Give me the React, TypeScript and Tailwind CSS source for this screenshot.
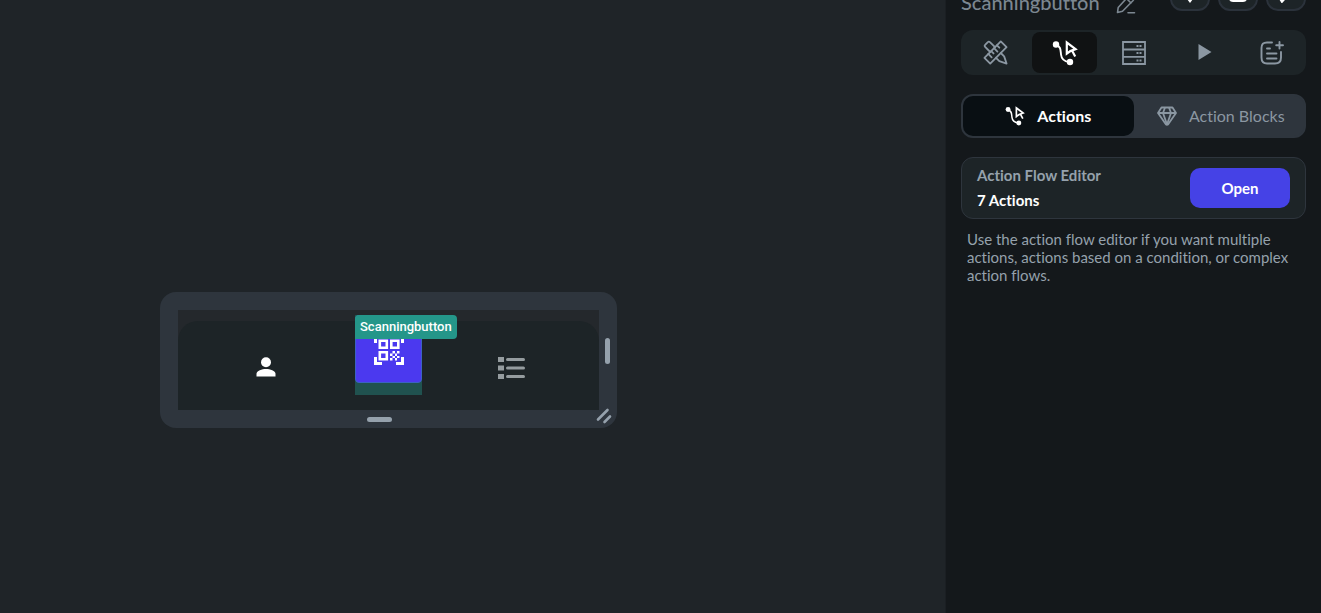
import React, { useState } from "react";

type IconProps = { className?: string };

const FlowIcon = ({ className }: IconProps) => (
	<svg className={className} viewBox="0 0 26 26" fill="none" stroke="currentColor" strokeLinecap="round">
		<circle cx="4" cy="4.500" r="3.200" fill="currentColor" stroke="none" />
		<circle cx="18" cy="22" r="3.200" fill="currentColor" stroke="none" />
		<path strokeWidth={1.9} d="M4 5c5 1.500 4.500 5 5 9.500C9.500 19 12 21.500 17 22" />
		<path strokeWidth={2.2} strokeLinejoin="miter" strokeLinecap="butt" d="M14.800 2.500v11.200l3.600-2.600 5.200-2zM20 10.500l3.200 6" />
	</svg>
);

const DesignIcon = ({ className }: IconProps) => (
	<svg
		className={className}
		viewBox="0 0 26 26"
		fill="none"
		stroke="currentColor"
		strokeWidth={1.9}
		strokeLinecap="round"
		strokeLinejoin="round"
	>
		<path d="M18.500 1.500 24.500 7.500 7.500 24.500 1.500 18.500z" />
		<path d="M14.500 5.500l2.500 2.500M11.500 8.500l3.500 3.500M8.500 11.500l2.500 2.500M5.500 14.500l3.500 3.500" />
		<path d="M7.500 12.500 2.200 7.200a1.500 1.500 0 0 1 0-2.200L5 2.200a1.500 1.500 0 0 1 2.200 0l5.300 5.300" />
		<path d="M18.500 13.500l3.500 3.500 2.500 7.500-7.500-2.500-3.500-3.500" />
	</svg>
);

const StorageIcon = ({ className }: IconProps) => (
	<svg className={className} viewBox="0 0 24 24" fill="none" stroke="currentColor" strokeWidth={1.8}>
		<path d="M1 1h22v22H1zM1 8.500h22M1 15.800h22" />
		<path strokeWidth={2} strokeDasharray="2 1" d="M14.500 4.900h5M14.500 12.100h5M14.500 19.500h5" />
	</svg>
);

const PlayIcon = ({ className }: IconProps) => (
	<svg className={className} viewBox="0 0 14 18" fill="currentColor">
		<path d="M.500 1v16L13.500 9z" />
	</svg>
);

const DocsIcon = ({ className }: IconProps) => (
	<svg
		className={className}
		viewBox="0 0 24 24"
		fill="none"
		stroke="currentColor"
		strokeWidth={1.9}
		strokeLinecap="round"
		strokeLinejoin="round"
	>
		<path d="M12 1.500H7C3 1.500 1.500 3.500 1.500 7v9.500c0 4 1.500 6 5.500 6h8c4 0 6-2 6-6V11" />
		<path d="M19.500 1v6.500M16.200 4.200H23M7 7.500h3M7 12.500h9.500M7 17.500h9.500" />
	</svg>
);

const DiamondIcon = ({ className }: IconProps) => (
	<svg className={className} viewBox="0 0 20 20" fill="none" stroke="currentColor" strokeWidth={1.8} strokeLinejoin="round">
		<path d="M4.500 1.500h11l3.500 5.500-8 11.500H9L1 7z" />
		<path d="M1 7h18M8 1.500 6 7l4 11.500L14 7l-2-5.500" />
	</svg>
);

const PencilIcon = ({ className }: IconProps) => (
	<svg
		className={className}
		viewBox="0 0 20 20"
		fill="none"
		stroke="currentColor"
		strokeWidth={1.6}
		strokeLinecap="round"
		strokeLinejoin="round"
	>
		<path d="M1.500 18.500l.700-5L12.500 2.200c1.500-1.600 3-1.400 4.400 0 1.500 1.500 1.400 3 0 4.500L6.500 17.200zM10.500 4.500l4.500 4.500M12 18.800h6.500" />
	</svg>
);

const PersonIcon = ({ className }: IconProps) => (
	<svg className={className} viewBox="0 0 20 20" fill="currentColor">
		<circle cx="10" cy="5.300" r="5" />
		<path d="M.500 19.500v-2.800c0-3 5.500-4.700 9.500-4.700s9.500 1.700 9.500 4.700v2.800z" />
	</svg>
);

const ListIcon = ({ className }: IconProps) => (
	<svg className={className} viewBox="0 0 28 22" fill="currentColor">
		<path d="M0 0h6v5H0zM0 8.500h6v5H0zM0 17h6v5H0z" />
		<rect x="8" y="1" width="19" height="3" rx="1.500" />
		<rect x="8" y="9.500" width="19" height="3" rx="1.500" />
		<rect x="8" y="18" width="19" height="3" rx="1.500" />
	</svg>
);

const QrIcon = ({ className }: IconProps) => (
	<svg className={className} viewBox="0 0 30 30" fill="none" stroke="currentColor">
		<path strokeWidth={3} d="M1.500 8V1.500H8M22 1.500h6.500V8M1.500 22v6.500H8M28.500 22v6.500H22" />
		<path strokeWidth={2.6} d="M5.800 5.800h7v7h-7zM17.300 5.800h7v7h-7zM5.800 17.300h7v7h-7z" />
		<path
			fill="currentColor"
			stroke="none"
			d="M18.500 16h2.500v2.500h-2.500zM23 16h2.500v2.500H23zM16 18.500h2.500V21H16zM21 18.500h2V21h-2zM18.500 21H21v2h-2.500zM23 21h2.500v2H23zM16 23h2.500v2.500H16zM21 23h2v2.500h-2z"
		/>
	</svg>
);

const tabs = [
	{ label: "Properties", Icon: DesignIcon, size: "size-[25px]" },
	{ label: "Actions", Icon: FlowIcon, size: "size-[26px]" },
	{ label: "Backend query", Icon: StorageIcon, size: "size-6" },
	{ label: "Animations", Icon: PlayIcon, size: "h-[18px] w-3.5 ml-1 -mt-0.5" },
	{ label: "Documentation", Icon: DocsIcon, size: "size-6" },
];

const Canvas = () => (
	<main className="flex-1 bg-[#1f2428] pt-[292px] pl-40">
		<div className="relative w-[457px] rounded-2xl bg-[#2e353d] p-[18px]">
			<div className="h-[100px] bg-[#24282c] pt-[11px]">
				<nav className="grid h-full grid-cols-3 rounded-t-[20px] bg-[#1d2427] px-[26px]">
					<button aria-label="Profile" className="flex items-center justify-center pt-0.5 text-white">
						<PersonIcon className="size-5" />
					</button>
					<div className="relative flex justify-center">
						<div className="-mt-1.5 h-20 w-[67px] bg-[#20524f]">
							<button
								aria-label="Scan"
								className="flex h-[68px] w-full items-center justify-center rounded-sm border border-[#3b62c4] bg-[#4b39ef] pt-0.5 text-white"
							>
								<QrIcon className="size-[30px]" />
							</button>
						</div>
						<span className="absolute -top-1.5 left-7 rounded-sm rounded-bl-none bg-[#249689] px-[5px] font-['Roboto',sans-serif] text-[13px] leading-6 font-medium text-white">
							Scanningbutton
						</span>
					</div>
					<button aria-label="List" className="flex items-center justify-center pt-1 text-[#959c9f]">
						<ListIcon className="h-[22px] w-7" />
					</button>
				</nav>
			</div>
			<span className="absolute top-[46px] right-[7px] h-[26px] w-[5px] rounded-full bg-[#95a1ac]" />
			<span className="absolute bottom-1.5 left-[207px] h-[5px] w-[25px] rounded-full bg-[#95a1ac]" />
			<svg
				className="absolute right-[5px] bottom-1 size-4 text-[#95a1ac]"
				viewBox="0 0 16 16"
				stroke="currentColor"
				strokeWidth={2.6}
				strokeLinecap="round"
			>
				<path d="M2 11.500 11.500 2M8.500 14l5.500-5.500" />
			</svg>
		</div>
	</main>
);

const Header = () => (
	<header className="-mt-[29px] flex h-11 items-end">
		<h1 className="text-xl leading-[26px] font-medium text-[#7c8791]">Scanningbutton</h1>
		<button aria-label="Rename" className="mb-px ml-4 text-[#7c8791]">
			<PencilIcon className="size-5" />
		</button>
		<div className="mb-1 ml-auto flex gap-2">
			<button aria-label="Wrap" className="flex size-10 items-end justify-center rounded-xl border-2 border-[#2b323b] bg-[#1d2427] pb-1.5 text-white">
				<svg className="size-3" viewBox="0 0 12 12" fill="currentColor">
					<path d="M0 4h12L6 12z" />
				</svg>
			</button>
			<button aria-label="Copy" className="flex size-10 items-end justify-center rounded-xl border-2 border-[#2b323b] bg-[#1d2427] pb-[7px]">
				<span className="h-4 w-[18px] rounded bg-white" />
			</button>
			<button aria-label="Apply" className="flex size-10 items-end justify-center rounded-xl border-2 border-[#2b323b] bg-[#1d2427] pb-1.5 text-white">
				<svg className="size-4" viewBox="0 0 16 16" fill="none" stroke="currentColor" strokeWidth={3} strokeLinecap="round">
					<path d="M1 9l3 5L14 3" />
				</svg>
			</button>
		</div>
	</header>
);

const App = () => {
	const [tab, setTab] = useState("Actions");

	return (
		<div className="flex min-h-screen bg-[#14181b] font-['Lato','Liberation_Sans',sans-serif] [font-variant-ligatures:none]">
			<Canvas />
			<aside className="w-[376px] shrink-0 overflow-hidden border-l border-[#1b1f23] px-[15px]">
				<Header />

				<div className="mt-[15px] grid h-[45px] grid-cols-5 rounded-xl bg-[#1d2427]">
					{tabs.map(({ label, Icon, size }) => (
						<button
							key={label}
							aria-label={label}
							onClick={() => setTab(label)}
							className={
								tab === label
									? "m-0.5 flex items-center justify-center rounded-lg bg-[#101213] text-white"
									: "m-0.5 flex items-center justify-center rounded-lg text-[#8b97a2]"
							}
						>
							<Icon className={size} />
						</button>
					))}
				</div>

				<div className="mt-[19px] grid h-11 grid-cols-2 rounded-xl border-2 border-[#2e353d] bg-[#2e353d] text-base">
					<button className="flex items-center justify-center gap-3 rounded-[10px] bg-[#090f13] font-bold text-white">
						<FlowIcon className="size-5" />
						Actions
					</button>
					<button className="flex items-center justify-center gap-3 pl-1 text-[#8b97a2]">
						<DiamondIcon className="size-5" />
						Action Blocks
					</button>
				</div>

				<section className="mt-[19px] flex items-center justify-between rounded-xl border border-[#2e353d] bg-[#1d2427] px-[15px] py-[5px]">
					<div className="text-[15px] leading-[25px]">
						<h2 className="font-bold text-[#95a1ac]">Action Flow Editor</h2>
						<p className="font-bold text-white">7 Actions</p>
					</div>
					<button className="h-10 w-[100px] rounded-[10px] bg-[#4542e6] text-[15px] font-bold text-white">Open</button>
				</section>

				<p className="mt-[11px] px-1.5 text-[15px] leading-[18px] text-[#95a1ac]">
					Use the action flow editor if you want multiple actions, actions based on a condition, or complex action flows.
				</p>
			</aside>
		</div>
	);
};

export default App;
